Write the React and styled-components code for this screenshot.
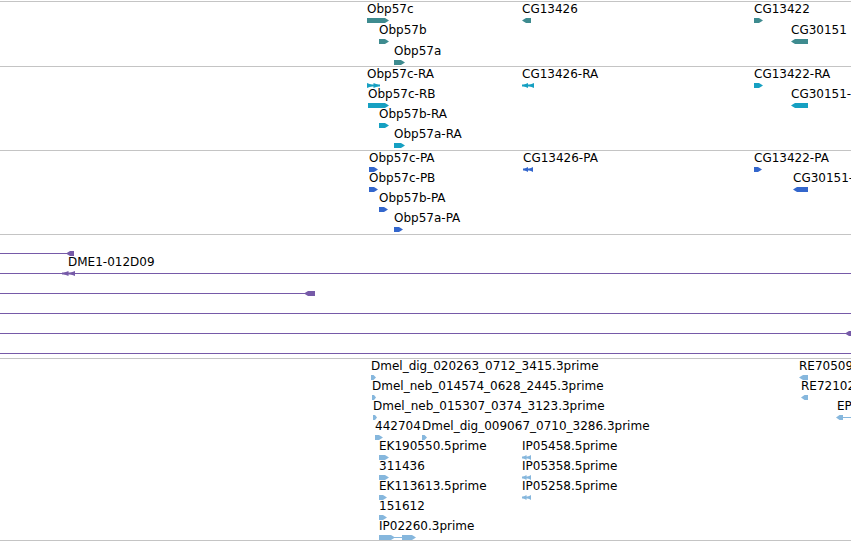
import React from 'react';
import styled, { createGlobalStyle } from 'styled-components';

const Global = createGlobalStyle`
  html, body { margin: 0; padding: 0; background: #fff; }
  body { font-family: "DejaVu Sans", "Liberation Sans", sans-serif; }
`;

const Page = styled.div`
  width: 851px;
  height: 542px;
  padding-top: 1px;
  box-sizing: border-box;
  overflow: hidden;
  background: #fff;
`;

const Track = styled.section`
  position: relative;
  height: ${(p) => p.$h}px;
  border-top: 1px solid #c4c4c4;
  border-bottom: ${(p) => (p.$last ? '1px solid #c4c4c4' : 'none')};
  display: flex;
  flex-direction: column;
  overflow: hidden;
`;

const Row = styled.div`
  position: relative;
  flex: 0 0 ${(p) => p.$h}px;
  height: ${(p) => p.$h}px;
`;

const Feature = styled.div`
  position: absolute;
  top: 0;
  display: flex;
  flex-direction: column;
  align-items: flex-start;
  padding-top: ${(p) => (p.$bare ? 16 : 0)}px;
`;

const Label = styled.span`
  font-size: 12px;
  line-height: 14px;
  height: 14px;
  margin-bottom: 2px;
  color: #000;
  white-space: nowrap;
`;

const GlyphSvg = styled.svg`
  display: block;
  overflow: visible;
`;

function shape(p, i, color) {
  const w = p.x2 - p.x1;
  const x1 = p.x1;
  const x2 = p.x2;
  if (p.k === 'line') return <rect key={i} x={x1} y={2} width={w} height={1} fill={color} />;
  if (p.k === 'r') {
    const t = Math.min(4, w / 2);
    return <polygon key={i} points={`${x1},0 ${x2 - t},0 ${x2},2.5 ${x2 - t},5 ${x1},5`} fill={color} />;
  }
  if (p.k === 'l') {
    const t = Math.min(4, w / 2);
    return <polygon key={i} points={`${x2},0 ${x1 + t},0 ${x1},2.5 ${x1 + t},5 ${x2},5`} fill={color} />;
  }
  if (p.k === 'rr') {
    const m = x1 + w / 2;
    return (
      <g key={i} fill={color}>
        <rect x={x1} y={1.5} width={w} height={2} />
        <polygon points={`${x1},0 ${m},2.5 ${x1},5`} />
        <polygon points={`${m},0 ${x2},2.5 ${m},5`} />
      </g>
    );
  }
  if (p.k === 'll') {
    const m = x1 + w / 2;
    return (
      <g key={i} fill={color}>
        <rect x={x1} y={1.5} width={w} height={2} />
        <polygon points={`${m},0 ${x1},2.5 ${m},5`} />
        <polygon points={`${x2},0 ${m},2.5 ${x2},5`} />
      </g>
    );
  }
  return null;
}

function Glyph({ parts, color, origin }) {
  const minX = Math.min(...parts.map((p) => p.x1));
  const maxX = Math.max(...parts.map((p) => p.x2));
  return (
    <GlyphSvg
      width={maxX - minX}
      height={6}
      viewBox={`${minX} 0 ${maxX - minX} 6`}
      style={{ marginLeft: minX - origin }}
    >
      {parts.map((p, i) => shape(p, i, color))}
    </GlyphSvg>
  );
}

const P = (k, x1, x2) => ({ k, x1, x2 });
const F = (x, label, ...parts) => ({ x, label, parts });

const tracks = [
  {
    h: 64,
    rowH: 21,
    color: '#3e8b8f',
    rows: [
      [F(367, 'Obp57c', P('r', 367, 389)), F(522, 'CG13426', P('l', 522, 531)), F(754, 'CG13422', P('r', 754, 763))],
      [F(379, 'Obp57b', P('r', 379, 389)), F(791, 'CG30151', P('l', 791, 808))],
      [F(394, 'Obp57a', P('r', 394, 405))],
    ],
  },
  {
    h: 83,
    rowH: 20,
    color: '#16a0c2',
    rows: [
      [F(367, 'Obp57c-RA', P('rr', 367, 380)), F(522, 'CG13426-RA', P('ll', 522, 534)), F(754, 'CG13422-RA', P('r', 754, 763))],
      [F(368, 'Obp57c-RB', P('r', 368, 389)), F(791, 'CG30151-RA', P('l', 791, 808))],
      [F(379, 'Obp57b-RA', P('r', 379, 389))],
      [F(394, 'Obp57a-RA', P('r', 394, 405))],
    ],
  },
  {
    h: 83,
    rowH: 20,
    color: '#3366cc',
    rows: [
      [F(369, 'Obp57c-PA', P('r', 369, 378)), F(523, 'CG13426-PA', P('ll', 523, 533)), F(754, 'CG13422-PA', P('r', 754, 762))],
      [F(369, 'Obp57c-PB', P('r', 369, 378)), F(793, 'CG30151-PA', P('l', 793, 808))],
      [F(379, 'Obp57b-PA', P('r', 379, 388))],
      [F(394, 'Obp57a-PA', P('r', 394, 403))],
    ],
  },
  {
    h: 123,
    rowH: 20,
    color: '#765aa8',
    rows: [
      [F(0, null, P('line', 0, 70), P('l', 66, 74))],
      [F(0, null, P('line', 0, 851), P('ll', 62, 75)), F(68, 'DME1-012D09')],
      [F(0, null, P('line', 0, 308), P('l', 304, 315))],
      [F(0, null, P('line', 0, 851))],
      [F(0, null, P('line', 0, 851), P('l', 845, 856))],
      [F(0, null, P('line', 0, 851))],
    ],
  },
  {
    h: 181,
    rowH: 20,
    color: '#86b7dd',
    last: true,
    rows: [
      [F(371, 'Dmel_dig_020263_0712_3415.3prime', P('r', 371, 376)), F(799, 'RE70509.5prime', P('l', 799, 808))],
      [F(372, 'Dmel_neb_014574_0628_2445.3prime', P('r', 372, 376)), F(801, 'RE72102.5prime', P('l', 801, 808))],
      [F(373, 'Dmel_neb_015307_0374_3123.3prime', P('r', 373, 377)), F(837, 'EP07781.5prime', P('line', 838, 860), P('l', 836, 843))],
      [F(375, '442704', P('r', 375, 383)), F(422, 'Dmel_dig_009067_0710_3286.3prime', P('r', 422, 427))],
      [F(379, 'EK190550.5prime', P('r', 379, 389)), F(522, 'IP05458.5prime', P('ll', 522, 531))],
      [F(379, '311436', P('r', 379, 389)), F(522, 'IP05358.5prime', P('ll', 522, 531))],
      [F(379, 'EK113613.5prime', P('r', 379, 387)), F(522, 'IP05258.5prime', P('ll', 522, 531))],
      [F(379, '151612', P('r', 379, 387))],
      [F(379, 'IP02260.3prime', P('r', 379, 395), P('line', 394, 403), P('r', 402, 416))],
    ],
  },
];

export default function App() {
  return (
    <>
      <Global />
      <Page>
        {tracks.map((t, ti) => (
          <Track key={ti} $h={t.h} $last={t.last}>
            {t.rows.map((row, ri) => (
              <Row key={ri} $h={t.rowH}>
                {row.map((f, fi) => (
                  <Feature key={fi} style={{ left: f.x }} $bare={!f.label}>
                    {f.label && <Label>{f.label}</Label>}
                    {f.parts.length > 0 && <Glyph parts={f.parts} color={t.color} origin={f.x} />}
                  </Feature>
                ))}
              </Row>
            ))}
          </Track>
        ))}
      </Page>
    </>
  );
}
